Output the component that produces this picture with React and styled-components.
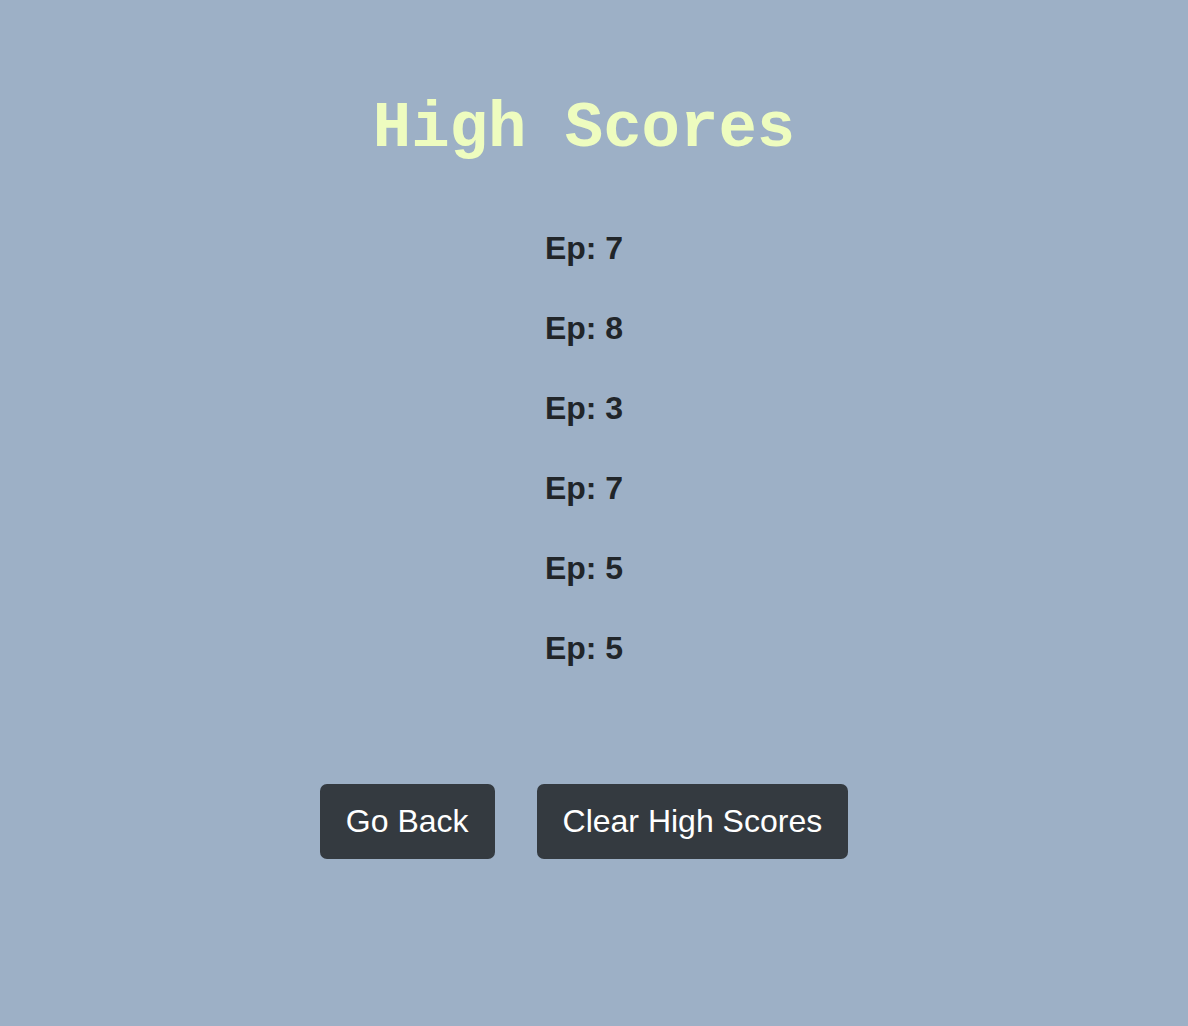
import React from "react";
import styled, { createGlobalStyle } from "styled-components";

const GlobalStyle = createGlobalStyle`
  html, body {
    margin: 0;
    padding: 0;
    background: #9db0c6;
  }
  body {
    font-family: "Liberation Sans", Arial, sans-serif;
  }
`;

const scores = [7, 8, 3, 7, 5, 5];

const App = () => {
  return (
    <>
      <GlobalStyle />
      <Page>
        <Title>High Scores</Title>
        <ScoreList>
          {scores.map((score, i) => (
            <ScoreItem key={i}>Ep: {score}</ScoreItem>
          ))}
        </ScoreList>
        <ButtonRow>
          <Button>Go Back</Button>
          <Button>Clear High Scores</Button>
        </ButtonRow>
      </Page>
    </>
  );
};

const Page = styled.div`
  min-height: 1026px;
  box-sizing: border-box;
  padding: 93px 20px 0 0;
  display: flex;
  flex-direction: column;
  align-items: center;
`;

const Title = styled.h1`
  margin: 0;
  font-family: "Liberation Mono", "Courier New", monospace;
  font-weight: 700;
  font-size: 64px;
  line-height: 72px;
  color: #eefcbf;
`;

const ScoreList = styled.ul`
  list-style: none;
  margin: 64px 0 0;
  padding: 0;
  display: flex;
  flex-direction: column;
  align-items: center;
  gap: 42px;
`;

const ScoreItem = styled.li`
  font-size: 32px;
  font-weight: 700;
  line-height: 38px;
  color: #212529;
`;

const ButtonRow = styled.div`
  display: flex;
  gap: 42px;
  margin-top: 117px;
`;

const Button = styled.button`
  font-family: "Liberation Sans", Arial, sans-serif;
  font-size: 32px;
  line-height: 48px;
  color: #fff;
  background: #343a40;
  border: none;
  border-radius: 7px;
  padding: 13px 26px 14px;
  cursor: pointer;
`;

export default App;
